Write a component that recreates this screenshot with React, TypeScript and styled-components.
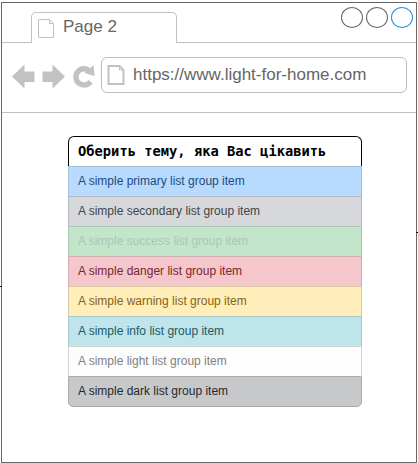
import React from "react";
import styled, { createGlobalStyle } from "styled-components";

const GlobalStyle = createGlobalStyle`
  * { box-sizing: border-box; }
  body { margin: 0; background: #fff; overflow: hidden; font-family: "Liberation Sans", Arial, sans-serif; }
`;

const Page = styled.div`
  position: relative;
  width: 418px;
  height: 463px;
  padding: 2px 1px 0;
`;

const Frame = styled.main`
  width: 416px;
  height: 461px;
  border: 1px solid #666;
  background: #fff;
`;

const Connector = styled.i<{ $side: "left" | "right"; $top: number }>`
  position: absolute;
  ${(p) => p.$side}: 0;
  top: ${(p) => p.$top}px;
  width: 2px;
  height: 1px;
  background: #111;
`;

const TabStrip = styled.header`
  display: flex;
  height: 40px;
`;

const StripStart = styled.div`
  width: 29px;
  border-bottom: 1px solid #c1c1c1;
`;

const Tab = styled.div`
  display: flex;
  width: 146px;
  height: 31px;
  margin-top: 9px;
  padding: 6px 0 0 6px;
  border: 1px solid #c1c1c1;
  border-bottom: 0;
  border-radius: 5px 5px 0 0;
`;

const TabTitle = styled.span`
  margin: -2px 0 0 9px;
  font-size: 17px;
  line-height: 20px;
  color: #666;
`;

const StripEnd = styled.div`
  display: flex;
  flex: 1;
  justify-content: flex-end;
  gap: 3px;
  padding: 4px 3px 0 0;
  border-bottom: 1px solid #c1c1c1;
`;

const Circle = styled.span<{ $color: string }>`
  width: 22px;
  height: 21px;
  border: 1px solid ${(p) => p.$color};
  border-radius: 50%;
`;

const Toolbar = styled.nav`
  display: flex;
  height: 70px;
  padding: 14px 9px 0 10px;
  border-bottom: 1px solid #c1c1c1;
`;

const NavIcons = styled.svg`
  display: block;
  flex: none;
  width: 89px;
  height: 36px;
`;

const AddressBar = styled.div`
  display: flex;
  flex: 1;
  height: 36px;
  padding: 7px 0 0 5px;
  border: 1px solid #bdbdbd;
  border-radius: 6px;
`;

const Address = styled.span`
  font-size: 17px;
  line-height: 20px;
  margin-left: 8px;
  white-space: nowrap;
  color: #666;
`;

const FileIcon = styled.svg`
  display: block;
  flex: none;
`;

const List = styled.ul`
  width: 294px;
  margin: 23px 0 0 66px;
  padding: 0;
  list-style: none;
`;

const ListTitle = styled.li`
  height: 30px;
  padding-left: 9px;
  border: 1px solid #000;
  border-bottom: 0;
  border-radius: 6px 6px 0 0;
  font: bold 13.75px/29px "DejaVu Sans Mono", monospace;
  white-space: pre;
  color: #000;
`;

const Item = styled.li<{ $bg: string; $fg: string; $line: string }>`
  height: 30px;
  padding-left: 9px;
  border: 1px solid ${(p) => p.$line};
  border-bottom: 0;
  background: ${(p) => p.$bg};
  color: ${(p) => p.$fg};
  font-size: 12px;
  line-height: 29px;

  &:last-child {
    height: 31px;
    border-bottom: 1px solid ${(p) => p.$line};
    border-radius: 0 0 5px 5px;
  }
`;

const items = [
  { name: "primary", bg: "#b8daff", fg: "#1d4b7e", line: "#a5bfd5" },
  { name: "secondary", bg: "#d6d8db", fg: "#41464b", line: "#b1bcc0" },
  { name: "success", bg: "#c3e6cb", fg: "#a9c8b0", line: "#a9c4b2" },
  { name: "danger", bg: "#f5c6cb", fg: "#782630", line: "#d1aeb1" },
  { name: "warning", bg: "#ffeeba", fg: "#856414", line: "#d9c9a3" },
  { name: "info", bg: "#bee5eb", fg: "#1c5964", line: "#a8c7ca" },
  { name: "light", bg: "#fdfdfe", fg: "#818182", line: "#d2d4d4" },
  { name: "dark", bg: "#c6c8ca", fg: "#25282b", line: "#a9abad" },
];

export default function App() {
  return (
    <Page>
      <GlobalStyle />
      <Frame>
        <TabStrip>
          <StripStart />
          <Tab>
            <FileIcon width="16" height="19" viewBox="0 0 16 19" fill="none" stroke="#c1c1c1">
              <path d="M.5.5H11.5L15.5 4.5V18.5H.5ZM11.5.5V4.5H15.5" />
            </FileIcon>
            <TabTitle>Page 2</TabTitle>
          </Tab>
          <StripEnd>
            <Circle $color="#666" />
            <Circle $color="#666" />
            <Circle $color="#1f91dc" />
          </StripEnd>
        </TabStrip>
        <Toolbar>
          <NavIcons viewBox="0 0 89 36">
            <g fill="#c2c2c2">
              <path d="M0 19.5 12.5 7.5V14.5H22.5V25H12.5V31.5Z" />
              <path d="M53 19.5 40.5 7.5V14.5H30.5V25H40.5V31.5Z" />
            </g>
            <path d="M78.6 24.6A8.1 8.1 0 1 1 77.6 14" fill="none" stroke="#c2c2c2" strokeWidth="5.4" />
            <path d="M81.4 8.3 82.6 19 72.5 16Z" fill="#c2c2c2" />
          </NavIcons>
          <AddressBar>
            <FileIcon width="18" height="20" viewBox="0 0 18 20" fill="none" stroke="#c2c2c2" strokeWidth="2">
              <path d="M1.5 1H12.5L16.5 5V19H1.5Z" />
              <path d="M12.5 1V5H16.5" strokeWidth="1" />
            </FileIcon>
            <Address>https://www.light-for-home.com</Address>
          </AddressBar>
        </Toolbar>
        <List>
          <ListTitle>Оберить тему, яка Вас цікавить</ListTitle>
          {items.map((item) => (
            <Item key={item.name} $bg={item.bg} $fg={item.fg} $line={item.line}>
              A simple {item.name} list group item
            </Item>
          ))}
        </List>
      </Frame>
      <Connector $side="left" $top={286} />
      <Connector $side="right" $top={232} />
    </Page>
  );
}
